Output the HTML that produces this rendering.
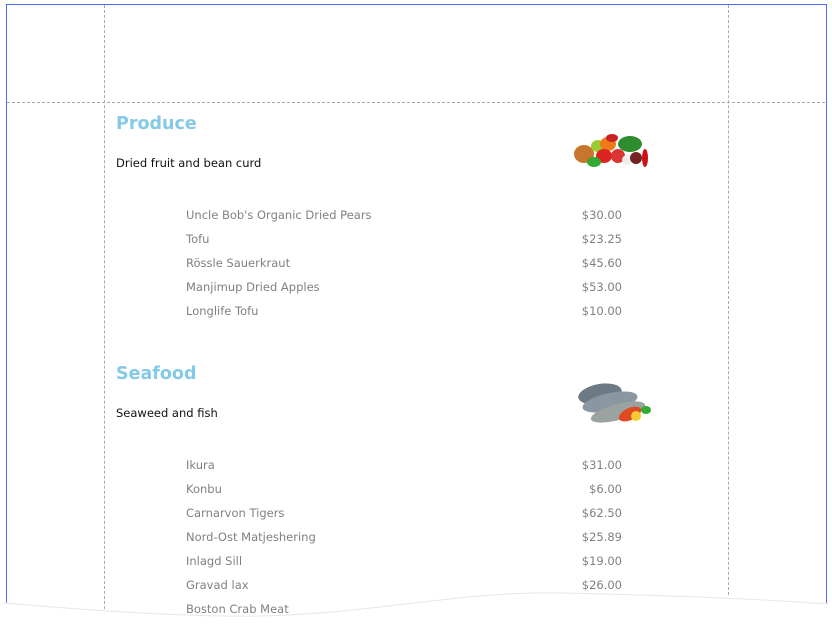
<!DOCTYPE html>
<html><head><meta charset="utf-8"><style>
html{overflow:hidden;height:624px;}
body{margin:0;width:832px;height:624px;background:#fff;position:relative;overflow:hidden;font-family:"DejaVu Sans","Liberation Sans",sans-serif;}
.page{position:absolute;left:6px;top:4px;width:819px;height:600px;border:1px solid #4a6cf7;border-bottom:none;}
.vl{position:absolute;top:5px;height:614px;border-left:1px dashed #aaa;}
.hl{position:absolute;left:7px;width:818px;top:102px;border-top:1px dashed #aaa;}
.t{position:absolute;white-space:nowrap;}
h2{position:absolute;margin:0;font-size:17.5px;color:#85c9e8;font-weight:bold;}
.cat{font-size:11.5px;color:#111;}
.it{font-size:11.5px;color:#808080;left:186px;}
.pr{font-size:11.5px;color:#808080;right:210px;text-align:right;}
</style></head><body>
<div class="page"></div>
<div class="vl" style="left:104px"></div>
<div class="vl" style="left:728px;height:590px"></div>
<div class="hl"></div>

<h2 style="left:116px;top:114px">Produce</h2>
<div class="t cat" style="left:116px;top:156px">Dried fruit and bean curd</div>
<svg style="position:absolute;left:570px;top:132px" width="88" height="42">
<ellipse cx="14" cy="22" rx="10" ry="9" fill="#c8762e"/>
<ellipse cx="28" cy="14" rx="7" ry="6" fill="#9c3"/>
<ellipse cx="38" cy="12" rx="8" ry="7" fill="#f07a1a"/>
<ellipse cx="34" cy="24" rx="8" ry="7" fill="#d22"/>
<ellipse cx="48" cy="24" rx="7" ry="7" fill="#d33"/>
<ellipse cx="60" cy="12" rx="12" ry="8" fill="#2e8b2e"/>
<ellipse cx="24" cy="30" rx="7" ry="5" fill="#3a3" />
<ellipse cx="57" cy="28" rx="5" ry="5" fill="#eee"/>
<ellipse cx="66" cy="26" rx="6" ry="6" fill="#722"/>
<ellipse cx="75" cy="26" rx="3" ry="9" fill="#c11"/>
<ellipse cx="42" cy="6" rx="6" ry="4" fill="#c22"/>
</svg>
<div class="t it" style="top:208px">Uncle Bob's Organic Dried Pears</div><div class="t pr" style="top:208px">$30.00</div>
<div class="t it" style="top:232px">Tofu</div><div class="t pr" style="top:232px">$23.25</div>
<div class="t it" style="top:256px">Rössle Sauerkraut</div><div class="t pr" style="top:256px">$45.60</div>
<div class="t it" style="top:280px">Manjimup Dried Apples</div><div class="t pr" style="top:280px">$53.00</div>
<div class="t it" style="top:304px">Longlife Tofu</div><div class="t pr" style="top:304px">$10.00</div>

<h2 style="left:116px;top:364px">Seafood</h2>
<div class="t cat" style="left:116px;top:406px">Seaweed and fish</div>
<svg style="position:absolute;left:570px;top:376px" width="88" height="52">
<ellipse cx="30" cy="18" rx="22" ry="10" fill="#6d7a85" transform="rotate(-10 30 18)"/>
<ellipse cx="40" cy="26" rx="28" ry="9" fill="#8a96a0" transform="rotate(-12 40 26)"/>
<ellipse cx="48" cy="36" rx="28" ry="8" fill="#9aa3a0" transform="rotate(-15 48 36)"/>
<ellipse cx="60" cy="38" rx="12" ry="6" fill="#e04a22" transform="rotate(-25 60 38)"/>
<circle cx="66" cy="40" r="5" fill="#f4cc30"/>
<ellipse cx="76" cy="34" rx="5" ry="4" fill="#3a3"/>
</svg>
<div class="t it" style="top:458px">Ikura</div><div class="t pr" style="top:458px">$31.00</div>
<div class="t it" style="top:482px">Konbu</div><div class="t pr" style="top:482px">$6.00</div>
<div class="t it" style="top:506px">Carnarvon Tigers</div><div class="t pr" style="top:506px">$62.50</div>
<div class="t it" style="top:530px">Nord-Ost Matjeshering</div><div class="t pr" style="top:530px">$25.89</div>
<div class="t it" style="top:554px">Inlagd Sill</div><div class="t pr" style="top:554px">$19.00</div>
<div class="t it" style="top:578px">Gravad lax</div><div class="t pr" style="top:578px">$26.00</div>
<div class="t it" style="top:602px">Boston Crab Meat</div>

<svg style="position:absolute;left:0;top:585px" width="832" height="39">
<defs><linearGradient id="g" x1="0" y1="0" x2="0" y2="1"><stop offset="0" stop-color="#fff" stop-opacity="0.5"/><stop offset="0.5" stop-color="#fff" stop-opacity="0.85"/><stop offset="1" stop-color="#fff" stop-opacity="1"/></linearGradient></defs>
<path d="M0 17 C120 28 200 32 260 31 C380 28 460 6 560 8 C660 10 760 14 832 19 L832 39 L0 39Z" fill="url(#g)"/>
<rect x="0" y="18" width="10" height="21" fill="#fff"/>
<rect x="822" y="18" width="10" height="21" fill="#fff"/>
<path d="M4 18 C120 28 200 32 260 31 C380 28 460 6 560 8 C660 10 760 14 828 19" fill="none" stroke="#e6e6e6" stroke-width="1"/>
</svg>
</body></html>
